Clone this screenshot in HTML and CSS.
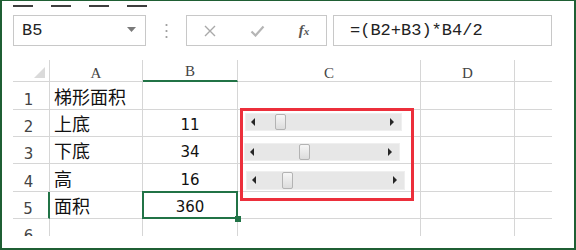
FILE: index.html
```html
<!DOCTYPE html>
<html lang="zh-CN">
<head>
<meta charset="utf-8">
<title>梯形面积</title>
<link rel="stylesheet" href="styles.css">
</head>
<body>
<div class="frame">
  <div class="tabs">
    <span class="tab"></span><span class="tab"></span><span class="tab"></span><span class="tab"></span>
  </div>
  <div class="fbar">
    <div class="namebox">
      <span class="name">B5</span>
      <svg class="dd" width="9" height="5" viewBox="0 0 9 5"><path d="M0 0H9L4.5 5Z" fill="#7a7a7a"/></svg>
    </div>
    <div class="sep">
      <svg width="3" height="16" viewBox="0 0 3 16"><circle cx="1.5" cy="2" r="1.1" fill="#9a9a9a"/><circle cx="1.5" cy="8" r="1.1" fill="#9a9a9a"/><circle cx="1.5" cy="14" r="1.1" fill="#9a9a9a"/></svg>
    </div>
    <div class="tools">
      <svg width="12" height="12" viewBox="0 0 12 12"><path d="M1 1L11 11M11 1L1 11" stroke="#a9a9a9" stroke-width="1.4" fill="none"/></svg>
      <svg width="15" height="12" viewBox="0 0 15 12"><path d="M1.5 6.5L5.5 10.5L13.5 1.5" stroke="#b5b5b5" stroke-width="2.2" fill="none"/></svg>
      <span class="fx">f<span class="fxx">x</span></span>
    </div>
    <div class="formula">=(B2+B3)*B4/2</div>
  </div>
  <div class="sheet">
    <div class="grid">
      <div class="c corner"><svg width="11" height="11" viewBox="0 0 11 11"><path d="M11 0V11H0Z" fill="#dadada"/></svg></div>
      <div class="c ch">A</div>
      <div class="c ch sel">B</div>
      <div class="c ch">C</div>
      <div class="c ch">D</div>
      <div class="c ch last"></div>

      <div class="c rh">1</div>
      <div class="c zh">梯形面积</div>
      <div class="c num"></div>
      <div class="c"></div>
      <div class="c"></div>
      <div class="c last"></div>

      <div class="c rh">2</div>
      <div class="c zh">上底</div>
      <div class="c num">11</div>
      <div class="c"></div>
      <div class="c"></div>
      <div class="c last"></div>

      <div class="c rh">3</div>
      <div class="c zh">下底</div>
      <div class="c num">34</div>
      <div class="c"></div>
      <div class="c"></div>
      <div class="c last"></div>

      <div class="c rh">4</div>
      <div class="c zh">高</div>
      <div class="c num">16</div>
      <div class="c"></div>
      <div class="c"></div>
      <div class="c last"></div>

      <div class="c rh sel">5</div>
      <div class="c zh">面积</div>
      <div class="c num active">360</div>
      <div class="c"></div>
      <div class="c"></div>
      <div class="c last"></div>

      <div class="c rh">6</div>
      <div class="c"></div>
      <div class="c"></div>
      <div class="c"></div>
      <div class="c"></div>
      <div class="c last"></div>
    </div>
    <div class="annot">
      <div class="sb sb1">
        <span class="arr-l"></span>
        <span class="thumb" style="left:29px"></span>
        <span class="arr-r"></span>
      </div>
      <div class="sb sb2">
        <span class="arr-l"></span>
        <span class="thumb" style="left:54px"></span>
        <span class="arr-r"></span>
      </div>
      <div class="sb sb3">
        <span class="arr-l"></span>
        <span class="thumb" style="left:35px"></span>
        <span class="arr-r"></span>
      </div>
    </div>
  </div>
</div>
</body>
</html>
```
FILE: styles.css
```css
html, body {
  margin: 0;
  padding: 0;
  background: #ffffff;
}

body {
  font-family: "Liberation Sans", Arial, sans-serif;
}

.frame {
  position: relative;
  width: 576px;
  height: 250px;
  box-sizing: border-box;
  border: 2px solid #1f5f34;
  border-top-width: 1px;
  background: #ffffff;
  padding: 4px 0 0 11px;
  overflow: hidden;
}

.tabs {
  display: flex;
  gap: 18px;
  height: 2px;
}

.tab {
  width: 20px;
  height: 2px;
  background: #3e3e3e;
}

.fbar {
  display: flex;
  height: 31px;
  margin-top: 8px;
}

.namebox {
  width: 133px;
  box-sizing: border-box;
  border: 1px solid #c8c8c8;
  display: flex;
  align-items: center;
  justify-content: space-between;
  padding: 0 9px 0 8px;
}

.name {
  font-family: "Liberation Mono", "Courier New", monospace;
  font-size: 17px;
  color: #222;
  line-height: 17px;
}

.dd {
  margin-top: -2px;
}

.sep {
  width: 40px;
  display: flex;
  align-items: center;
  justify-content: center;
}

.tools {
  width: 141px;
  box-sizing: border-box;
  border: 1px solid #c8c8c8;
  display: grid;
  grid-template-columns: 45px 50px 44px;
  align-items: center;
  justify-items: center;
}

.fx {
  font-family: "Liberation Serif", "Times New Roman", serif;
  font-style: italic;
  font-weight: bold;
  font-size: 15px;
  color: #555;
  line-height: 15px;
}

.fxx {
  font-size: 11px;
}

.formula {
  width: 219px;
  margin-left: 6px;
  box-sizing: border-box;
  border: 1px solid #c8c8c8;
  display: flex;
  align-items: center;
  padding-left: 16px;
  font-family: "Liberation Mono", "Courier New", monospace;
  font-size: 17px;
  color: #222;
}

.sheet {
  position: relative;
  margin-top: 14px;
  width: 539px;
  height: 176px;
}

.grid {
  display: grid;
  grid-template-columns: 37px 93px 95px 183px 94px 37px;
  grid-template-rows: 22px 28px 27px 27px 28px 27px 27px;
  height: 176px;
  overflow: hidden;
}

.c {
  box-sizing: border-box;
  border-right: 1px solid #d6d6d6;
  border-bottom: 1px solid #d6d6d6;
  display: flex;
  align-items: flex-end;
}

.c.last {
  border-right: none;
}

.corner {
  justify-content: flex-end;
  padding: 0 4px 3px 0;
}

.ch {
  justify-content: center;
  font-family: "Liberation Serif", "Times New Roman", serif;
  font-size: 15px;
  line-height: 15px;
  color: #444;
}

.ch.sel {
  border-bottom: 2px solid #217346;
  padding-bottom: 1px;
}

.rh {
  justify-content: center;
  padding: 0 5px 1px 0;
  font-family: "DejaVu Sans", sans-serif;
  font-size: 15px;
  line-height: 15px;
  color: #444;
}

.rh.sel {
  border-right: 2px solid #217346;
}

.zh {
  padding: 0 0 4px 4px;
  font-family: "Noto Sans CJK SC", sans-serif;
  font-size: 18px;
  line-height: 18px;
  color: #111;
}

.num {
  justify-content: center;
  padding-bottom: 3px;
  font-family: "DejaVu Sans", sans-serif;
  font-size: 15px;
  line-height: 15px;
  color: #111;
}

.active {
  position: relative;
}

.active::after {
  content: "";
  position: absolute;
  left: -1px;
  top: -1px;
  right: -1px;
  bottom: -1px;
  border: 2px solid #217346;
}

.active::before {
  content: "";
  position: absolute;
  right: -4px;
  bottom: -4px;
  width: 6px;
  height: 6px;
  background: #217346;
  z-index: 1;
}

.annot {
  position: absolute;
  left: 227px;
  top: 48px;
  width: 174px;
  height: 93px;
  box-sizing: border-box;
  border: 3px solid #ec2f3b;
}

.sb {
  position: absolute;
  height: 18px;
  box-sizing: border-box;
  background: #e7e7e7;
  border: 1px solid #efefef;
}

.sb1 {
  left: 2px;
  top: 2px;
  width: 157px;
}

.sb2 {
  left: 1px;
  top: 32px;
  width: 156px;
}

.sb3 {
  left: 3px;
  top: 60px;
  width: 159px;
  height: 19px;
}

.arr-l,
.arr-r {
  position: absolute;
  top: 4px;
  width: 0;
  height: 0;
  border-top: 4px solid transparent;
  border-bottom: 4px solid transparent;
}

.arr-l {
  left: 5px;
  border-right: 4px solid #262626;
}

.arr-r {
  right: 7px;
  border-left: 4px solid #262626;
}

.thumb {
  position: absolute;
  top: 0;
  bottom: 0;
  width: 11px;
  box-sizing: border-box;
  border: 1px solid #b3b3b3;
  border-radius: 2px;
  background: linear-gradient(to bottom, #f6f6f6, #dcdcdc);
}
```
